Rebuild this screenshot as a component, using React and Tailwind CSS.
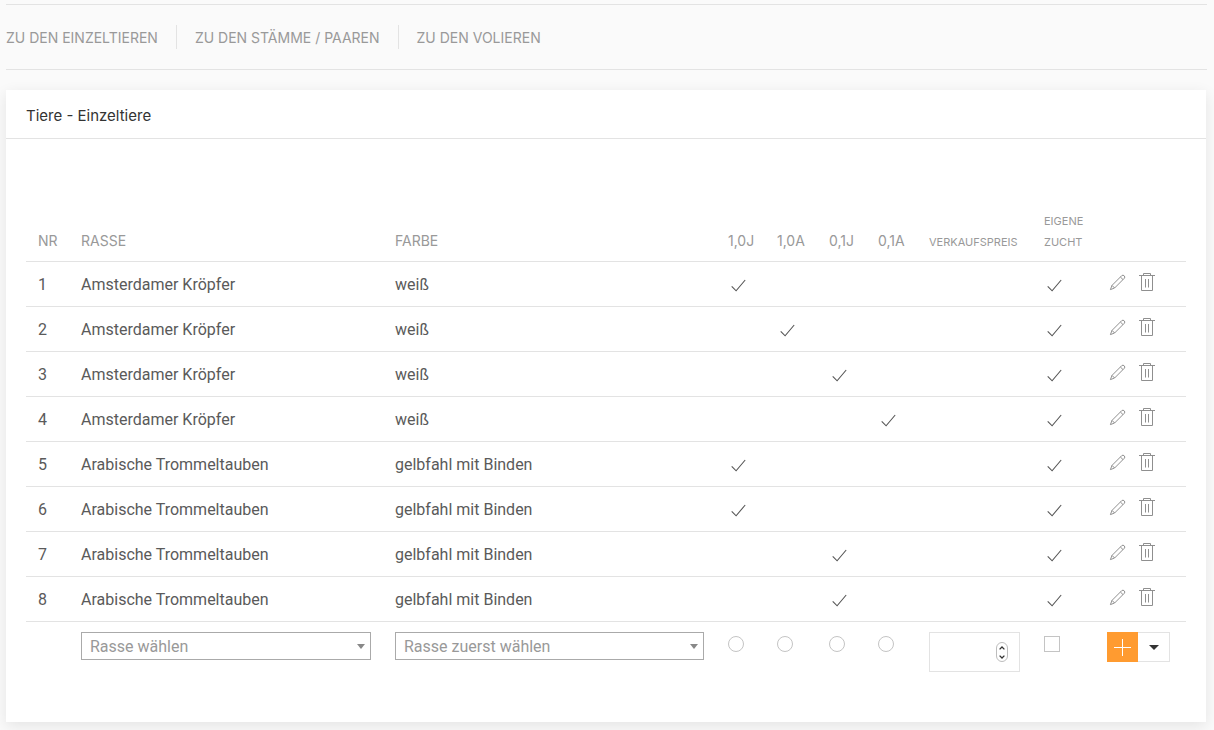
import React, { useState } from "react";

const NAV = ["Zu den Einzeltieren", "Zu den Stämme / Paaren", "Zu den Volieren"];

const GENDERS = ["1,0J", "1,0A", "0,1J", "0,1A"];

const ANIMALS = [
  { nr: 1, rasse: "Amsterdamer Kröpfer", farbe: "weiß", typ: "1,0J" },
  { nr: 2, rasse: "Amsterdamer Kröpfer", farbe: "weiß", typ: "1,0A" },
  { nr: 3, rasse: "Amsterdamer Kröpfer", farbe: "weiß", typ: "0,1J" },
  { nr: 4, rasse: "Amsterdamer Kröpfer", farbe: "weiß", typ: "0,1A" },
  { nr: 5, rasse: "Arabische Trommeltauben", farbe: "gelbfahl mit Binden", typ: "1,0J" },
  { nr: 6, rasse: "Arabische Trommeltauben", farbe: "gelbfahl mit Binden", typ: "1,0J" },
  { nr: 7, rasse: "Arabische Trommeltauben", farbe: "gelbfahl mit Binden", typ: "0,1J" },
  { nr: 8, rasse: "Arabische Trommeltauben", farbe: "gelbfahl mit Binden", typ: "0,1J" },
];

function CheckIcon() {
  return (
    <svg className="mt-1 block size-5" viewBox="0 0 20 20" fill="none" stroke="#555" strokeWidth="1.1" role="img" aria-label="Ja">
      <path d="M3.7 10.3 L8.1 14.8 L17.2 4" />
    </svg>
  );
}

function PencilIcon() {
  return (
    <svg className="block size-5" viewBox="0 0 20 20" fill="none" stroke="#8f8f8f" strokeWidth="1" strokeLinejoin="round" aria-hidden="true">
      <path d="M3.4 17.6 L5 13.4 L14.8 3.6 Q16 2.6 17.2 3.8 Q18.4 5 17.4 6.2 L7.6 16 Z" />
      <path d="M5 13.4 L7.6 16 M13.4 5 L16 7.6" />
    </svg>
  );
}

function TrashIcon() {
  return (
    <svg className="block size-5" viewBox="0 0 20 20" fill="none" stroke="#8f8f8f" strokeWidth="1" aria-hidden="true">
      <path d="M2 3.5 H18 M6.5 3.5 V1.5 H13.5 V3.5 M4.5 3.5 V18.5 H15.5 V3.5 M8.5 7 V15.5 M11.5 7 V15.5" />
    </svg>
  );
}

function SelectBox({ label, placeholder, options }) {
  return (
    <div className="relative">
      <select
        aria-label={label}
        defaultValue=""
        className="block h-7 w-full appearance-none border border-[#aaa] bg-white pt-0.5 pr-6 pl-2 font-['Roboto',sans-serif] text-base leading-6 text-[#999]"
      >
        <option value="">{placeholder}</option>
        {options.map((o) => (
          <option key={o}>{o}</option>
        ))}
      </select>
      <svg className="pointer-events-none absolute top-3 right-1.5 h-[5px] w-2" viewBox="0 0 8 5" fill="#888" aria-hidden="true">
        <path d="M0 0 H8 L4 5 Z" />
      </svg>
    </div>
  );
}

function Th({ children, small }) {
  return (
    <th
      scope="col"
      className={
        "px-3 text-left align-bottom font-normal text-[#999] uppercase " +
        (small ? "pb-2 text-[11px] leading-[21px]" : "pb-2.5 text-sm leading-[21px]")
      }
    >
      {children}
    </th>
  );
}

export default function App() {
  const [typ, setTyp] = useState("");
  const [preis, setPreis] = useState("");
  const step = (d) => setPreis(String((Number(preis) || 0) + d));

  return (
    <div className="min-h-screen bg-[#fafafa] px-1.5 pt-1 pb-2 font-['Inter','Roboto',sans-serif] text-[#5a5a5a]">
      <nav className="mr-px border-y border-[#e3e3e3] py-5">
        <ul className="flex divide-x divide-[#e3e3e3]">
          {NAV.map((item) => (
            <li key={item} className="px-[18px] first:pl-0">
              <a href="#" className="block pt-0.5 text-sm leading-[22px] text-[#999] uppercase">
                {item}
              </a>
            </li>
          ))}
        </ul>
      </nav>

      <main className="mt-5 mr-0.5 bg-white pb-[50px] shadow-[0_4px_14px_rgba(0,0,0,0.09)]">
        <h1 className="border-b border-[#e3e3e3] px-5 pt-3.5 pb-2.5 text-[15px] leading-6 text-[#333]">Tiere - Einzeltiere</h1>

        <div className="px-5 pt-[72px]">
          <table className="w-full table-fixed border-collapse">
            <colgroup>
              <col className="w-[43px]" />
              <col className="w-[314px]" />
              <col />
              <col className="w-[49px]" />
              <col className="w-[52px]" />
              <col className="w-[49px]" />
              <col className="w-[51px]" />
              <col className="w-[115px]" />
              <col className="w-[63px]" />
              <col className="w-[91px]" />
            </colgroup>
            <thead>
              <tr className="border-b border-[#e3e3e3]">
                <Th>Nr</Th>
                <Th>Rasse</Th>
                <Th>Farbe</Th>
                {GENDERS.map((g) => (
                  <Th key={g}>{g}</Th>
                ))}
                <Th small>Verkaufspreis</Th>
                <Th small>Eigene Zucht</Th>
                <td />
              </tr>
            </thead>
            <tbody className="font-['Roboto',sans-serif] text-base">
              {ANIMALS.map((a) => (
                <tr key={a.nr} className="h-[45px] border-b border-[#e3e3e3]">
                  <td className="px-3 pt-0.5">{a.nr}</td>
                  <td className="px-3 pt-0.5">{a.rasse}</td>
                  <td className="px-3 pt-0.5">{a.farbe}</td>
                  {GENDERS.map((g) => (
                    <td key={g} className="px-3">
                      {a.typ === g && <CheckIcon />}
                    </td>
                  ))}
                  <td />
                  <td className="px-3">
                    <CheckIcon />
                  </td>
                  <td className="pl-3">
                    <div className="flex gap-2.5 pb-1">
                      <button type="button" aria-label={"Tier " + a.nr + " bearbeiten"}>
                        <PencilIcon />
                      </button>
                      <button type="button" aria-label={"Tier " + a.nr + " löschen"}>
                        <TrashIcon />
                      </button>
                    </div>
                  </td>
                </tr>
              ))}
              <tr className="align-top">
                <td />
                <td className="px-3 pt-2.5">
                  <SelectBox label="Rasse" placeholder="Rasse wählen" options={["Amsterdamer Kröpfer", "Arabische Trommeltauben"]} />
                </td>
                <td className="px-3 pt-2.5">
                  <SelectBox label="Farbe" placeholder="Rasse zuerst wählen" options={[]} />
                </td>
                {GENDERS.map((g) => (
                  <td key={g} className="px-3 pt-3.5">
                    <input
                      type="radio"
                      name="typ"
                      aria-label={g}
                      checked={typ === g}
                      onChange={() => setTyp(g)}
                      className="block size-4 appearance-none rounded-full border border-[#c4c4c4] bg-white checked:border-[5px] checked:border-[#ff9b30]"
                    />
                  </td>
                ))}
                <td className="px-3 pt-2.5">
                  <div className="relative">
                    <input
                      type="number"
                      aria-label="Verkaufspreis"
                      value={preis}
                      onChange={(e) => setPreis(e.target.value)}
                      className="block h-10 w-full [appearance:textfield] border border-[#e3e3e3] bg-white pr-7 pl-3 text-base outline-none [&::-webkit-inner-spin-button]:appearance-none"
                    />
                    <div className="absolute top-2.5 right-3 flex h-5 w-3 flex-col overflow-hidden rounded-full border border-[#bdbdbd] bg-white">
                      <button type="button" aria-label="Preis erhöhen" onClick={() => step(1)} className="flex flex-1 items-center justify-center">
                        <svg className="h-1 w-1.5" viewBox="0 0 6 4" fill="none" stroke="#333" strokeWidth="1.3" aria-hidden="true">
                          <path d="M0.6 3.4 L3 1 L5.4 3.4" />
                        </svg>
                      </button>
                      <button type="button" aria-label="Preis verringern" onClick={() => step(-1)} className="flex flex-1 items-center justify-center">
                        <svg className="h-1 w-1.5" viewBox="0 0 6 4" fill="none" stroke="#333" strokeWidth="1.3" aria-hidden="true">
                          <path d="M0.6 0.6 L3 3 L5.4 0.6" />
                        </svg>
                      </button>
                    </div>
                  </div>
                </td>
                <td className="px-3 pt-3.5">
                  <input
                    type="checkbox"
                    aria-label="Eigene Zucht"
                    className="block size-4 appearance-none border border-[#c4c4c4] bg-white checked:bg-[#ff9b30]"
                  />
                </td>
                <td className="pt-2.5 pl-3">
                  <div className="flex">
                    <button type="button" aria-label="Tier hinzufügen" className="flex h-[30px] w-[31px] items-center justify-center bg-[#ff9b30]">
                      <svg className="size-[17px]" viewBox="0 0 17 17" stroke="#fff" strokeWidth="1" aria-hidden="true">
                        <path d="M8.5 0 V17 M0 8.5 H17" />
                      </svg>
                    </button>
                    <button
                      type="button"
                      aria-label="Weitere Aktionen"
                      className="flex h-[30px] w-8 items-center justify-center border border-l-0 border-[#e3e3e3] bg-white"
                    >
                      <svg className="h-[5px] w-2.5" viewBox="0 0 10 5" fill="#333" aria-hidden="true">
                        <path d="M0 0 H10 L5 5 Z" />
                      </svg>
                    </button>
                  </div>
                </td>
              </tr>
            </tbody>
          </table>
        </div>
      </main>
    </div>
  );
}
